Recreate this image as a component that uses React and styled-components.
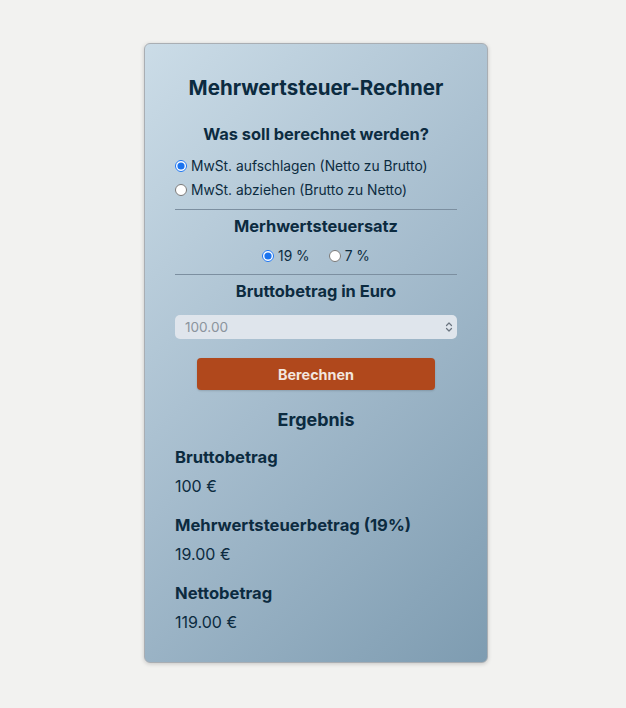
import React from "react";
import styled, { createGlobalStyle } from "styled-components";

const Global = createGlobalStyle`
  html, body {
    margin: 0;
    background: #f2f2f0;
    font-family: Inter, "Noto Sans", sans-serif;
    color: #0c2b40;
  }
`;

const Page = styled.div`
  display: flex;
  justify-content: center;
  align-items: flex-start;
  padding: 43px 0 0 6px;
  min-height: 708px;
  box-sizing: border-box;
`;

const Card = styled.div`
  width: 344px;
  box-sizing: border-box;
  padding: 32px 30px 30px;
  border: 1px solid #a9aeb3;
  border-radius: 6px;
  background: linear-gradient(135deg, #cbdce7 0%, #a5bccd 50%, #7e9cb1 100%);
  box-shadow: 0 1px 4px rgba(0, 0, 0, 0.18);
`;

const Title = styled.h1`
  margin: 0;
  font-size: 20.5px;
  line-height: 24px;
  font-weight: 700;
  text-align: center;
`;

const Heading = styled.h2`
  margin: ${(p) => p.$mt || 0}px 0 0;
  font-size: ${(p) => p.$size || 16.4}px;
  line-height: 20px;
  font-weight: 700;
  text-align: center;
`;

const Options = styled.div`
  display: flex;
  flex-direction: ${(p) => (p.$row ? "row" : "column")};
  justify-content: ${(p) => (p.$row ? "center" : "flex-start")};
  gap: ${(p) => (p.$row ? "19px" : "8px")};
  margin-top: ${(p) => p.$mt}px;
`;

const Option = styled.label`
  display: flex;
  align-items: center;
  gap: 4px;
  font-size: 13.8px;
  line-height: 16px;
  color: #0c2b40;

  input {
    margin: 0;
    width: 12px;
    height: 12px;
    accent-color: #1a73ef;
  }
`;

const Rule = styled.hr`
  margin: ${(p) => p.$mt}px 0 0;
  border: none;
  border-top: 1px solid #7c8fa0;
`;

const InputWrap = styled.div`
  position: relative;
  margin-top: 14px;
`;

const Amount = styled.input`
  width: 100%;
  box-sizing: border-box;
  height: 24px;
  border: none;
  border-radius: 5px;
  background: #dfe5ec;
  padding: 0 10px;
  font-family: inherit;
  font-size: 13.6px;
  color: #0c2b40;
  outline: none;

  &::placeholder {
    color: #8b949d;
  }
`;

const Spinner = styled.svg`
  position: absolute;
  right: 4px;
  top: 6px;
`;

const Button = styled.button`
  display: block;
  width: 238px;
  height: 32px;
  margin: 19px auto 0;
  border: none;
  border-radius: 4px;
  background: #b0481c;
  color: #f3e6df;
  font-family: inherit;
  font-size: 14.4px;
  font-weight: 700;
  box-shadow: 0 1px 2px rgba(0, 0, 0, 0.15);
`;

const Result = styled.div`
  margin-top: 17px;
  display: flex;
  flex-direction: column;
  gap: 19px;
`;

const Item = styled.div`
  display: flex;
  flex-direction: column;
  gap: 9px;
`;

const Label = styled.div`
  font-size: 16.6px;
  line-height: 20px;
  font-weight: 700;
`;

const Value = styled.div`
  font-size: 16px;
  line-height: 20px;
`;

const results = [
  ["Bruttobetrag", "100 €"],
  ["Mehrwertsteuerbetrag (19%)", "19.00 €"],
  ["Nettobetrag", "119.00 €"],
];

export default function App() {
  return (
    <>
      <Global />
      <Page>
        <Card>
          <Title>Mehrwertsteuer-Rechner</Title>
          <Heading $mt={24}>Was soll berechnet werden?</Heading>
          <Options $mt={14}>
            <Option>
              <input type="radio" name="mode" defaultChecked />
              MwSt. aufschlagen (Netto zu Brutto)
            </Option>
            <Option>
              <input type="radio" name="mode" />
              MwSt. abziehen (Brutto zu Netto)
            </Option>
          </Options>
          <Rule $mt={11} />
          <Heading $mt={6}>Merhwertsteuersatz</Heading>
          <Options $row $mt={12}>
            <Option>
              <input type="radio" name="rate" defaultChecked />
              19 %
            </Option>
            <Option>
              <input type="radio" name="rate" />7 %
            </Option>
          </Options>
          <Rule $mt={10} />
          <Heading $mt={6}>Bruttobetrag in Euro</Heading>
          <InputWrap>
            <Amount type="text" placeholder="100.00" />
            <Spinner width="8" height="12" viewBox="0 0 8 12" fill="none" stroke="#6b7580" strokeWidth="1.2" strokeLinecap="round" strokeLinejoin="round">
              <path d="M1.5 4.5 L4 2 L6.5 4.5" />
              <path d="M1.5 7.5 L4 10 L6.5 7.5" />
            </Spinner>
          </InputWrap>
          <Button>Berechnen</Button>
          <Heading $mt={20} $size={17.9}>Ergebnis</Heading>
          <Result>
            {results.map(([label, value]) => (
              <Item key={label}>
                <Label>{label}</Label>
                <Value>{value}</Value>
              </Item>
            ))}
          </Result>
        </Card>
      </Page>
    </>
  );
}
